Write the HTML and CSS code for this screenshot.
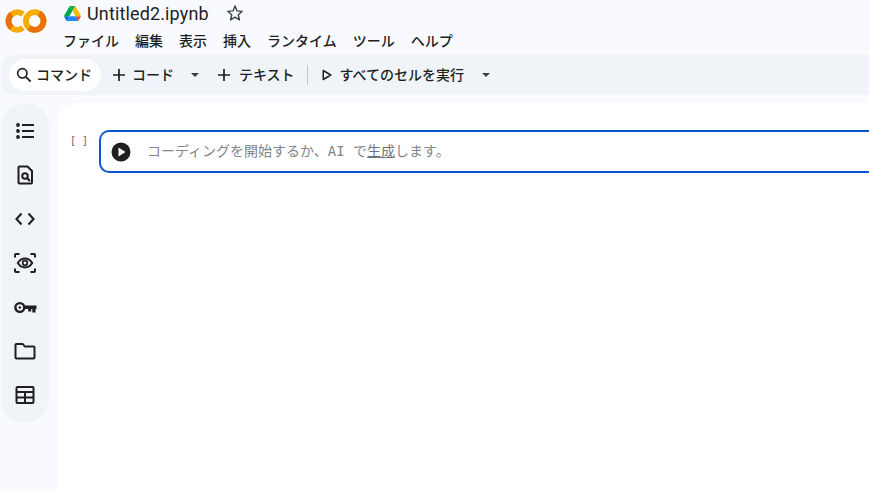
FILE: index.html
```html
<!DOCTYPE html>
<html lang="ja">
<head>
<meta charset="utf-8">
<title>Untitled2.ipynb</title>
<link rel="stylesheet" href="styles.css">
</head>
<body>
<header class="header">
  <svg class="logo" viewBox="5 8 42 26" width="42" height="26">
    <g fill="none" stroke-width="5.800">
      <circle cx="17.300" cy="21" r="8.800" pathLength="360" stroke="#f9ab00" stroke-dasharray="260 100" transform="rotate(50 17.300 21)"/>
      <circle cx="17.300" cy="21" r="8.800" pathLength="360" stroke="#e8710a" stroke-dasharray="100 260" transform="rotate(130 17.300 21)"/>
      <circle cx="34.700" cy="21" r="8.800" stroke="#f9ab00"/>
      <circle cx="34.700" cy="21" r="8.800" pathLength="360" stroke="#e8710a" stroke-dasharray="190 170" transform="rotate(-60 34.700 21)"/>
    </g>
  </svg>
  <div class="titles">
    <div class="title-row">
      <svg class="drive" viewBox="0 0 87.300 78" width="17" height="15">
        <path d="m6.600 66.850 3.850 6.650c.8 1.400 1.950 2.500 3.300 3.300l13.750-23.800h-27.500c0 1.550.4 3.100 1.200 4.500z" fill="#0066da"/>
        <path d="m43.650 25-13.750-23.800c-1.350.8-2.500 1.900-3.300 3.300l-25.400 44a9.060 9.060 0 0 0 -1.200 4.500h27.500z" fill="#00ac47"/>
        <path d="m73.550 76.800c1.350-.8 2.500-1.900 3.300-3.300l1.600-2.750 7.650-13.250c.8-1.400 1.200-2.950 1.200-4.500h-27.502l5.852 11.500z" fill="#ea4335"/>
        <path d="m43.650 25 13.750-23.800c-1.350-.8-2.900-1.200-4.500-1.200h-18.500c-1.600 0-3.150.45-4.500 1.200z" fill="#00ac47"/>
        <path d="m59.800 53h-32.300l-13.750 23.800c1.350.8 2.900 1.200 4.500 1.200h50.800c1.600 0 3.150-.45 4.500-1.200z" fill="#2684fc"/>
        <path d="m73.400 26.500-12.700-22c-.8-1.400-1.950-2.500-3.300-3.300l-13.750 23.800 16.150 28h27.450c0-1.550-.4-3.100-1.200-4.500z" fill="#ffba00"/>
      </svg>
      <span class="file-name">Untitled2.ipynb</span>
      <svg class="star" viewBox="0 0 24 24" width="20" height="20"><path d="M12 3.600l2.400 5.900 6.300.5-4.800 4.100 1.500 6.200L12 17l-5.400 3.300 1.500-6.200-4.800-4.100 6.300-.5z" fill="none" stroke="#3c4043" stroke-width="1.700" stroke-linejoin="round"/></svg>
    </div>
    <nav class="menu">
      <span>ファイル</span><span>編集</span><span>表示</span><span>挿入</span><span>ランタイム</span><span>ツール</span><span>ヘルプ</span>
    </nav>
  </div>
</header>
<div class="toolbar">
  <div class="pill">
    <svg viewBox="0 0 24 24" width="20" height="20"><circle cx="10" cy="10" r="5.600" fill="none" stroke="#1f1f1f" stroke-width="2"/><path d="M14.200 14.200 20 20" stroke="#1f1f1f" stroke-width="2.200"/></svg>
    <span class="label">コマンド</span>
  </div>
  <div class="tool tool-code">
    <svg class="plus" viewBox="0 0 14 14" width="14" height="14"><path d="M7 1v12M1 7h12" stroke="#1f1f1f" stroke-width="1.700"/></svg>
    <span class="label">コード</span>
    <i class="caret caret-code"></i>
  </div>
  <div class="tool tool-text">
    <svg class="plus" viewBox="0 0 14 14" width="14" height="14"><path d="M7 1v12M1 7h12" stroke="#1f1f1f" stroke-width="1.700"/></svg>
    <span class="label">テキスト</span>
  </div>
  <div class="divider"></div>
  <div class="tool tool-run">
    <svg viewBox="0 0 12 14" width="10" height="12"><path d="M1.500 1.600 10.500 7l-9 5.400z" fill="none" stroke="#1f1f1f" stroke-width="1.800" stroke-linejoin="round"/></svg>
    <span class="label">すべてのセルを実行</span>
    <i class="caret caret-run"></i>
  </div>
</div>
<div class="body">
  <aside class="sidebar">
    <svg viewBox="0 0 24 24" width="24" height="24"><g fill="#1f1f1f"><circle cx="5" cy="6" r="1.900"/><circle cx="5" cy="12" r="1.900"/><circle cx="5" cy="18" r="1.900"/><rect x="9" y="5" width="12" height="2"/><rect x="9" y="11" width="12" height="2"/><rect x="9" y="17" width="12" height="2"/></g></svg>
    <svg viewBox="0 0 24 24" width="24" height="24"><path d="M6.500 3.500h8l4.500 4.500v11.500a1 1 0 0 1-1 1H6.500a1 1 0 0 1-1-1v-15a1 1 0 0 1 1-1z" fill="none" stroke="#1f1f1f" stroke-width="2" stroke-linejoin="round"/><circle cx="12" cy="13" r="2.800" fill="none" stroke="#1f1f1f" stroke-width="2"/><path d="M14 15l3 3" stroke="#1f1f1f" stroke-width="2.200"/></svg>
    <svg viewBox="0 0 24 24" width="24" height="24"><path d="M8.500 6.500 3.500 12l5 5.500M15.500 6.500l5 5.500-5 5.500" fill="none" stroke="#1f1f1f" stroke-width="2.100"/></svg>
    <svg viewBox="0 0 24 24" width="24" height="24"><path d="M2 6.500V4a1 1 0 0 1 1-1h3.500M17.500 3H21a1 1 0 0 1 1 1v2.500M22 17.500V20a1 1 0 0 1-1 1h-3.500M6.500 21H3a1 1 0 0 1-1-1v-2.500" fill="none" stroke="#1f1f1f" stroke-width="2"/><path d="M4.800 12C6.800 8.900 9.400 7.600 12 7.600s5.200 1.300 7.200 4.400c-2 3.100-4.600 4.400-7.200 4.400S6.800 15.100 4.800 12z" fill="none" stroke="#1f1f1f" stroke-width="2"/><circle cx="12" cy="12" r="2.300" fill="none" stroke="#1f1f1f" stroke-width="1.700"/></svg>
    <svg viewBox="0 0 24 24" width="24" height="24"><circle cx="6.800" cy="12.500" r="4.400" fill="none" stroke="#1f1f1f" stroke-width="2.400"/><circle cx="6.800" cy="12.500" r="1.300" fill="#1f1f1f"/><path d="M11 10.500H23.500v3.400h-1v3.600h-3.200v-3.600h-1.100v2.600h-3v-2.600H11z" fill="#1f1f1f"/></svg>
    <svg viewBox="0 0 24 24" width="24" height="24"><path d="M3.500 5h6.300l2 2.500h8.700a1 1 0 0 1 1 1v10a1 1 0 0 1-1 1H3.500a1 1 0 0 1-1-1V6a1 1 0 0 1 1-1z" fill="none" stroke="#1f1f1f" stroke-width="2" stroke-linejoin="round"/></svg>
    <svg viewBox="0 0 24 24" width="24" height="24"><path d="M4.500 4h15a1 1 0 0 1 1 1v14a1 1 0 0 1-1 1h-15a1 1 0 0 1-1-1V5a1 1 0 0 1 1-1zM3.500 9h17M3.500 14.500h17M12 9v11" fill="none" stroke="#1f1f1f" stroke-width="2"/></svg>
  </aside>
  <main class="main">
    <div class="cell">
      <span class="brackets">[ ]</span>
      <div class="editor">
        <svg class="run" viewBox="0 0 20 20" width="20" height="20"><circle cx="10" cy="10" r="9.500" fill="#1f1f1f"/><path d="M7.500 5.500 14.500 10l-7 4.500z" fill="#fff"/></svg>
        <span class="placeholder">コーディングを開始するか、AI で<u>生成</u>します。</span>
      </div>
    </div>
  </main>
</div>
</body>
</html>
```
FILE: styles.css
```css
* { box-sizing: border-box; }
html, body { height: 100%; }
body {
  margin: 0;
  width: 869px;
  height: 489px;
  overflow: hidden;
  background: #f9faff;
  color: #1f1f1f;
  font-family: "Roboto", "Noto Sans CJK JP", sans-serif;
  display: flex;
  flex-direction: column;
}
.header {
  height: 55px;
  flex: none;
  display: flex;
  padding-left: 5px;
}
.logo { margin-top: 8px; flex: none; }
.titles { margin-left: 16px; }
.title-row {
  display: flex;
  align-items: center;
  height: 26px;
  padding-left: 1px;
}
.file-name { font-size: 18px; letter-spacing: .14px; margin-left: 6px; white-space: nowrap; }
.star { margin-left: 16px; }
.menu {
  display: flex;
  gap: 16px;
  margin-top: 4px;
  font-size: 14px;
  font-weight: 500;
  line-height: 22px;
  white-space: nowrap;
}
.toolbar {
  height: 40px;
  flex: none;
  margin-left: 1px;
  padding-left: 8px;
  background: #f0f3f8;
  border-radius: 12px 0 0 12px;
  display: flex;
  align-items: center;
  font-size: 14px;
  font-weight: 500;
  white-space: nowrap;
}
.label { padding-bottom: 2px; }
.pill {
  width: 92px;
  height: 32px;
  background: #fff;
  border-radius: 16px;
  display: flex;
  align-items: center;
  gap: 2px;
  padding-left: 5px;
}
.tool { display: flex; align-items: center; }
.tool-code { margin-left: 11px; gap: 6px; }
.tool-text { margin-left: 18px; gap: 8px; }
.tool-run { margin-left: 14px; gap: 8px; }
.caret {
  width: 0;
  height: 0;
  border: 4px solid transparent;
  border-top: 4.500px solid #3c4043;
  border-bottom: 0;
}
.caret-code { margin-left: 11px; }
.caret-run { margin-left: 10px; }
.divider {
  width: 1px;
  height: 20px;
  margin-left: 12px;
  background: #c4c7c5;
}
.body {
  flex: 1;
  display: flex;
  padding-top: 8px;
  min-height: 0;
}
.sidebar {
  width: 48px;
  height: 320px;
  margin-left: 1px;
  flex: none;
  background: #f0f3f8;
  border-radius: 24px;
  padding-top: 16px;
  display: flex;
  flex-direction: column;
  align-items: center;
  gap: 20px;
}
.main {
  flex: 1;
  margin-left: 8px;
  background: #fff;
  border-radius: 20px 0 0 0;
  padding-top: 27px;
}
.cell { display: flex; padding-left: 13px; }
.brackets {
  font-family: "DejaVu Sans Mono", monospace;
  font-size: 10px;
  line-height: 14px;
  width: 29px;
  padding-top: 4px;
  color: #5f6368;
  white-space: pre;
}
.editor {
  flex: 1;
  height: 43px;
  border: 2px solid #0b57d0;
  border-right: 0;
  border-radius: 10px 0 0 10px;
  display: flex;
  align-items: center;
  padding-left: 10px;
}
.run { flex: none; }
.placeholder {
  margin-left: 16px;
  padding-bottom: 3px;
  font-family: "DejaVu Sans Mono", "Noto Sans CJK JP", monospace;
  font-size: 14px;
  color: #80868b;
  white-space: nowrap;
}
.placeholder u { color: #70757a; }
```
